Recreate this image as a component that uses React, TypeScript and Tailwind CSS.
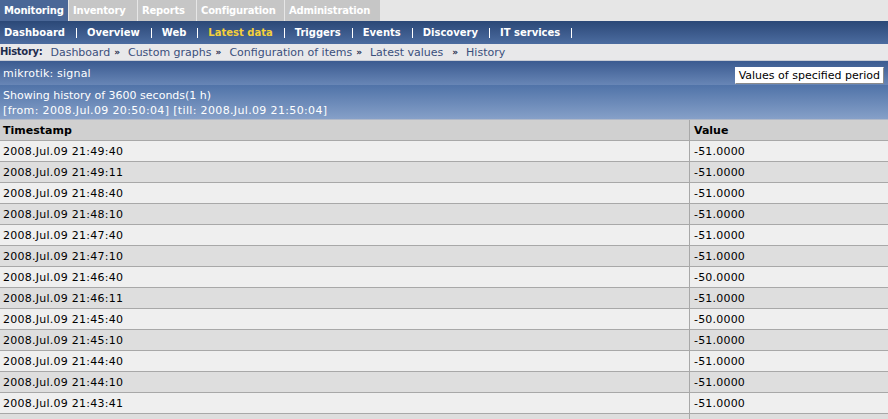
import React from "react";

const tabs: [string, string][] = [
  ["Monitoring", "w-[68px]"],
  ["Inventory", "w-[68px]"],
  ["Reports", "w-[58px]"],
  ["Configuration", "w-[87px]"],
  ["Administration", "w-[95px]"],
];
const subnav = ["Dashboard", "Overview", "Web", "Latest data", "Triggers", "Events", "Discovery", "IT services"];
const crumbs = ["Dashboard", "Custom graphs", "Configuration of items", "Latest values", "History"];

const rows: [string, string][] = [
  ["2008.Jul.09 21:49:40", "-51.0000"],
  ["2008.Jul.09 21:49:11", "-51.0000"],
  ["2008.Jul.09 21:48:40", "-51.0000"],
  ["2008.Jul.09 21:48:10", "-51.0000"],
  ["2008.Jul.09 21:47:40", "-51.0000"],
  ["2008.Jul.09 21:47:10", "-51.0000"],
  ["2008.Jul.09 21:46:40", "-50.0000"],
  ["2008.Jul.09 21:46:11", "-51.0000"],
  ["2008.Jul.09 21:45:40", "-50.0000"],
  ["2008.Jul.09 21:45:10", "-51.0000"],
  ["2008.Jul.09 21:44:40", "-51.0000"],
  ["2008.Jul.09 21:44:10", "-51.0000"],
  ["2008.Jul.09 21:43:41", "-51.0000"],
  ["", ""],
];

const App = () => {
  return (
    <div className="w-[888px] h-[419px] overflow-hidden bg-[#e6e6e6] text-[11px] leading-none" style={{ fontFamily: '"DejaVu Sans", Tahoma, sans-serif' }}>
      {/* main tabs */}
      <div className="flex h-[21px]">
        {tabs.map(([t, w], i) => (
          <div
            key={t}
            className={
              "flex items-center pl-[4px] mr-[1px] font-bold text-[10px] text-white tracking-[-0.2px] " +
              w +
              " " +
              (i === 0 ? "bg-[#4a6797]" : "bg-[#c6c6c6]")
            }
          >
            {t}
          </div>
        ))}
      </div>

      {/* sub navigation */}
      <div className="flex items-center h-[23px] bg-gradient-to-b from-[#2b4877] to-[#4c6ca0] pl-[4px] font-bold text-[10px] text-white">
        {subnav.map((s) => (
          <span key={s} className="flex items-center">
            <span className={s === "Latest data" ? "text-[#f4d03a]" : ""}>{s}</span>
            <span className="ml-[11px] mr-[10px] w-px h-[10px] bg-white" />
          </span>
        ))}
      </div>

      {/* breadcrumb */}
      <div className="flex items-center h-[17px] bg-[#e8e8ea] text-[#3a4f7c] text-[11px] border-b border-[#c8ccd4]">
        <span className="font-bold text-[10px] text-[#1e2c4c] tracking-[-0.3px] mr-[8px]">History:</span>
        {crumbs.map((c, i) => (
          <span key={c} className="flex items-center">
            {i > 0 && (
              <span className={"font-bold text-[#1e2c4c] text-[9px] mr-[8px] " + (i === 4 ? "ml-[9px]" : "ml-[4px]")}>»</span>
            )}
            <span>{c}</span>
          </span>
        ))}
      </div>

      {/* title bar */}
      <div className="flex items-center justify-between h-[24px] bg-gradient-to-b from-[#3b5b90] to-[#6886b6] pl-[3px] text-white text-[11px] tracking-[0.2px]">
        <span>mikrotik: signal</span>
        <span className="bg-white text-black text-[11px] tracking-[0px] px-[3px] py-[2px] mt-[4px] mr-[4px] border border-[#8a8a8a] border-t-white border-l-white">
          Values of specified period
        </span>
      </div>

      {/* info band */}
      <div className="h-[35px] bg-gradient-to-b from-[#5073a8] to-[#86a0c8] pl-[3px] pt-[3px] text-white text-[11px] leading-[15px] border-b border-[#b0b8c8]">
        <div>Showing history of 3600 seconds(1 h)</div>
        <div className="tracking-[0.35px]">[from: 2008.Jul.09 20:50:04] [till: 2008.Jul.09 21:50:04]</div>
      </div>

      {/* table */}
      <div className="grid grid-cols-[690px_1fr]">
        <div className="h-[21px] flex items-center pl-[3px] bg-[#d0d0d0] border-b border-[#a8a8a8] border-r border-r-[#a8a8a8] font-bold text-black">
          Timestamp
        </div>
        <div className="h-[21px] flex items-center pl-[4px] bg-[#d0d0d0] border-b border-[#a8a8a8] font-bold text-black">
          Value
        </div>
        {rows.map(([ts, v], i) => (
          <React.Fragment key={i}>
            <div
              className={
                "h-[21px] flex items-center pl-[3px] border-b border-[#a8a8a8] border-r border-r-[#a8a8a8] text-black tracking-[0.25px] " +
                (i % 2 === 0 ? "bg-[#efefef]" : "bg-[#dedede]")
              }
            >
              {ts}
            </div>
            <div
              className={
                "h-[21px] flex items-center pl-[4px] border-b border-[#a8a8a8] text-black tracking-[0.2px] " +
                (i % 2 === 0 ? "bg-[#efefef]" : "bg-[#dedede]")
              }
            >
              {v}
            </div>
          </React.Fragment>
        ))}
      </div>
    </div>
  );
};

export default App;
